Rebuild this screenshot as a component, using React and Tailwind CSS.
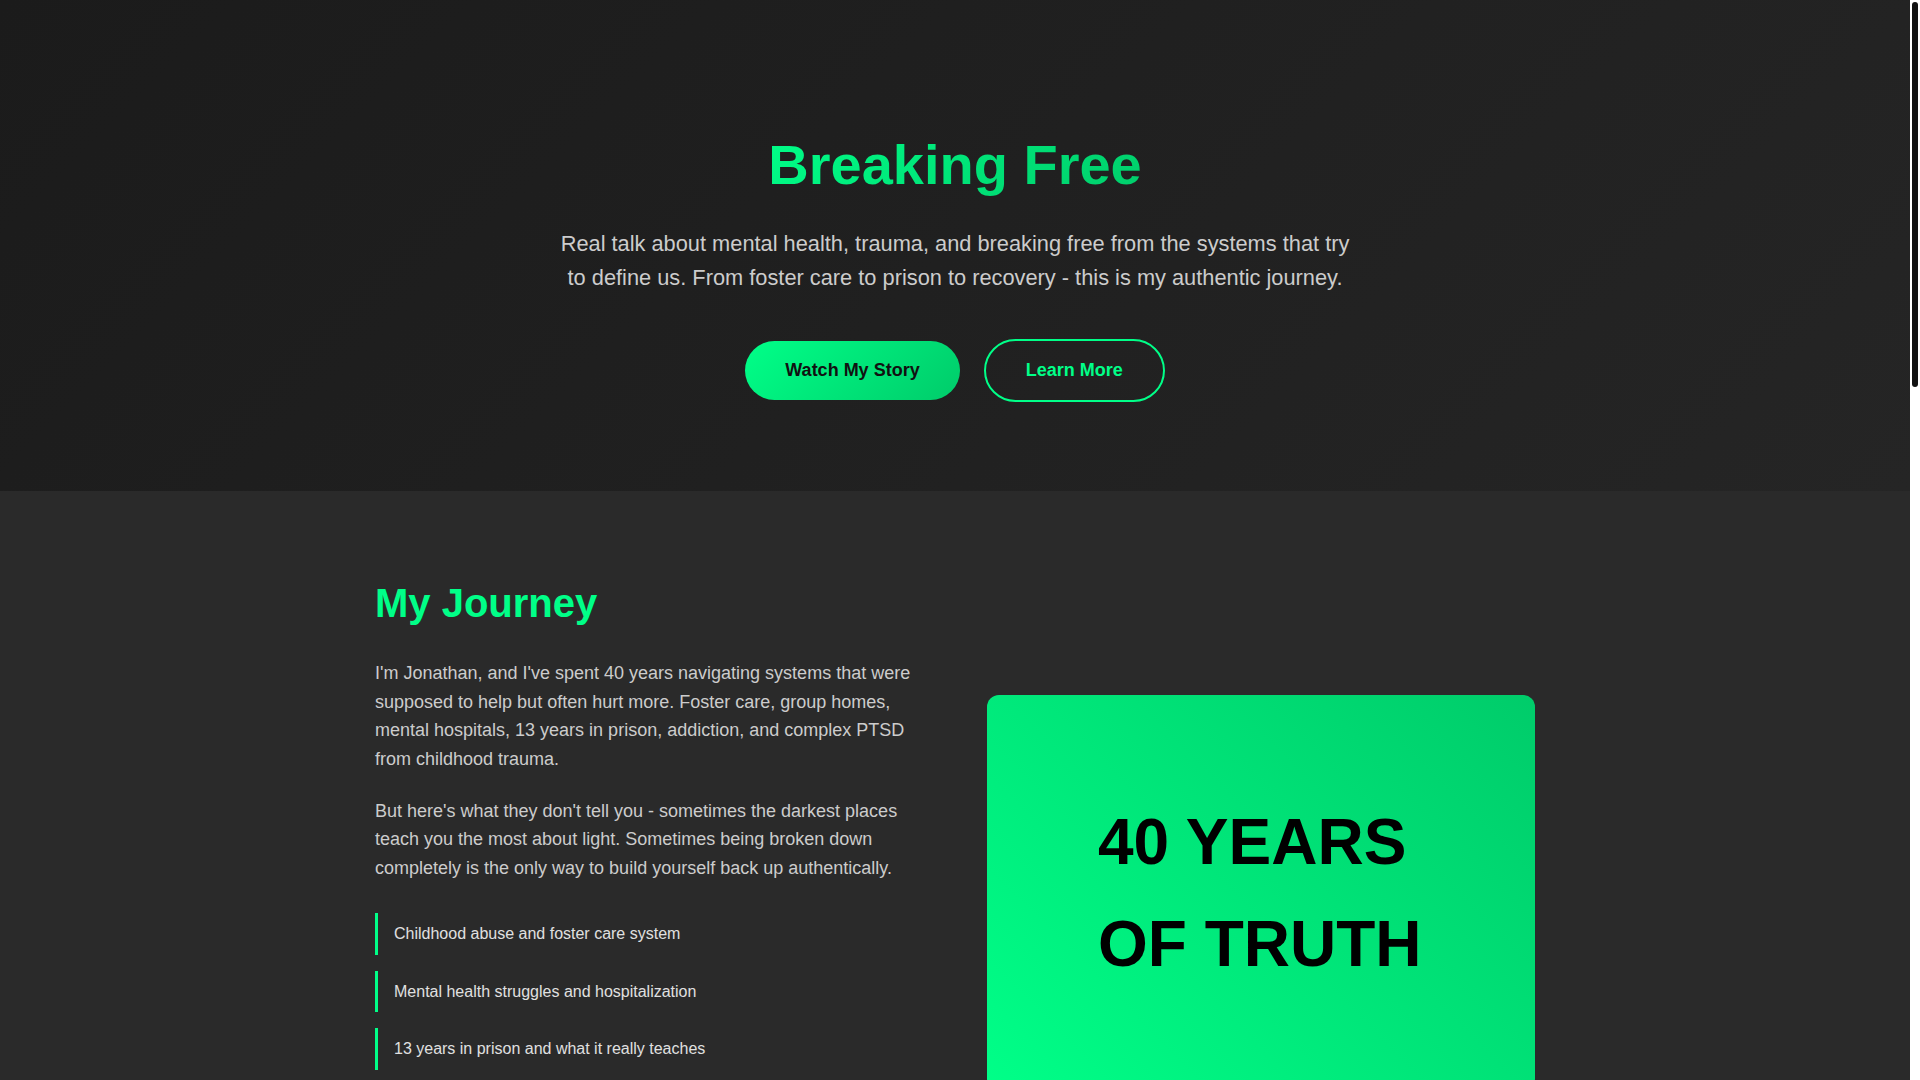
import React from 'react';

// =============================================================================
// DATA
// =============================================================================

const journeyPoints = [
  'Childhood abuse and foster care system',
  'Mental health struggles and hospitalization',
  '13 years in prison and what it really teaches',
  'Addiction, recovery and living with complex PTSD',
];

const videos = [
  { title: 'Growing Up in the System', length: '18:42' },
  { title: 'What Prison Taught Me About Freedom', length: '24:10' },
  { title: 'Living With Complex PTSD', length: '21:05' },
];

// =============================================================================
// COMPONENTS
// =============================================================================

// Hero
const Hero = () => (
  <section className="bg-[linear-gradient(135deg,#1b1b1b,#252525)] px-8 pt-[120px] pb-[89px] text-center">
    <div className="flex justify-center">
      <h1 className="inline-block bg-[linear-gradient(135deg,#00ff88,#00cc6a)] bg-clip-text text-[3.5rem] font-bold leading-[1.6] text-transparent">
        Breaking Free
      </h1>
    </div>
    <p className="mx-auto mt-[17px] max-w-[800px] text-[21.8px] leading-[1.6] text-[#cccccc]">
      Real talk about mental health, trauma, and breaking free from the systems that try to define us.
      From foster care to prison to recovery - this is my authentic journey.
    </p>
    <div className="mt-[43px] flex items-center justify-center gap-6">
      <button className="rounded-full bg-[linear-gradient(135deg,#00ff88,#00cc6a)] px-10 py-4 text-[18px] font-bold leading-[1.5] text-[#111111]">
        Watch My Story
      </button>
      <button className="rounded-full border-2 border-[#00ff88] px-10 py-4 text-[18px] font-bold leading-[1.5] text-[#00ff88]">
        Learn More
      </button>
    </div>
  </section>
);

// Journey section
const Journey = () => (
  <section className="bg-[#2a2a2a] pt-20 pb-20">
    <div className="mx-auto max-w-[1200px] px-5">
      <h2 className="mb-6 text-[2.5rem] font-bold leading-[1.6] text-[#00ff88]">My Journey</h2>

      <div className="grid grid-cols-2 items-center gap-16">
        <div>
          <p className="mb-6 text-[18px] leading-[28.4px] text-[#cccccc]">
            I'm Jonathan, and I've spent 40 years navigating systems that were supposed to help but
            often hurt more. Foster care, group homes, mental hospitals, 13 years in prison, addiction,
            and complex PTSD from childhood trauma.
          </p>
          <p className="mb-[31px] text-[18px] leading-[28.4px] text-[#cccccc]">
            But here's what they don't tell you - sometimes the darkest places teach you the most about
            light. Sometimes being broken down completely is the only way to build yourself back up
            authentically.
          </p>
          <ul className="flex flex-col gap-4">
            {journeyPoints.map((point) => (
              <li key={point} className="border-l-[3px] border-[#00ff88] py-2 pl-4 text-base leading-[1.6] text-[#e0e0e0]">
                {point}
              </li>
            ))}
          </ul>
        </div>

        <div className="flex h-[396px] items-center justify-center rounded-[12px] bg-[linear-gradient(45deg,#00ff88,#00cc6a)]">
          <h3 className="w-[326px] text-[4rem] font-bold leading-[1.6] text-black">40 YEARS OF TRUTH</h3>
        </div>
      </div>
    </div>
  </section>
);

// Videos section
const Videos = () => (
  <section className="bg-[#1e1e1e] py-20">
    <div className="mx-auto max-w-[1200px] px-5">
      <h2 className="mb-10 text-center text-[2.5rem] font-bold leading-[1.6] text-[#00ff88]">Latest Videos</h2>
      <div className="grid grid-cols-3 gap-8">
        {videos.map((video) => (
          <div key={video.title} className="overflow-hidden rounded-[12px] bg-[#2a2a2a]">
            <div className="flex aspect-video items-center justify-center bg-[#111111]">
              <div className="flex h-16 w-16 items-center justify-center rounded-full bg-[#00ff88]">
                <svg width="22" height="22" viewBox="0 0 24 24" fill="#111111">
                  <path d="M7 4.5v15l12-7.5z" />
                </svg>
              </div>
            </div>
            <div className="p-6">
              <h4 className="text-[1.2rem] font-bold text-white">{video.title}</h4>
              <p className="mt-2 text-sm text-[#999999]">{video.length}</p>
            </div>
          </div>
        ))}
      </div>
    </div>
  </section>
);

// Support section
const Support = () => (
  <section className="bg-[#2a2a2a] px-8 py-28 text-center">
    <h2 className="text-[2.5rem] font-bold leading-[1.6] text-[#00ff88]">You Are Not Alone</h2>
    <p className="mx-auto mt-6 max-w-[700px] text-[1.1rem] leading-[1.6] text-[#cccccc]">
      If you're carrying trauma, fighting addiction, or coming home after years inside, there is a way
      forward. Reach out, share your story, and let's break free together.
    </p>
    <button className="mt-10 rounded-full bg-[linear-gradient(135deg,#00ff88,#00cc6a)] px-10 py-4 text-[1.1rem] font-bold leading-[1.5] text-[#111111]">
      Get In Touch
    </button>
  </section>
);

// Footer
const Footer = () => (
  <footer className="bg-[#111111] px-8 py-16 text-center text-sm text-[#888888]">
    <p>© 2024 Breaking Free. Real stories, real recovery.</p>
  </footer>
);

// Page scrollbar (track + thumb), drawn over the right edge
const Scrollbar = () => (
  <div className="fixed top-0 right-0 h-screen w-[10px] bg-white">
    <div className="absolute top-[2px] right-[2px] left-[2px] h-[385px] rounded-full bg-[#111111]" />
  </div>
);

// =============================================================================
// MAIN APP COMPONENT
// =============================================================================

export default function App() {
  return (
    <div className="bg-[#2a2a2a] font-['Liberation_Sans',Arial,sans-serif] leading-[1.6]">
      <div className="mr-[10px]">
        <Hero />
        <Journey />
        <Videos />
        <Support />
        <Footer />
      </div>
      <Scrollbar />
    </div>
  );
}
